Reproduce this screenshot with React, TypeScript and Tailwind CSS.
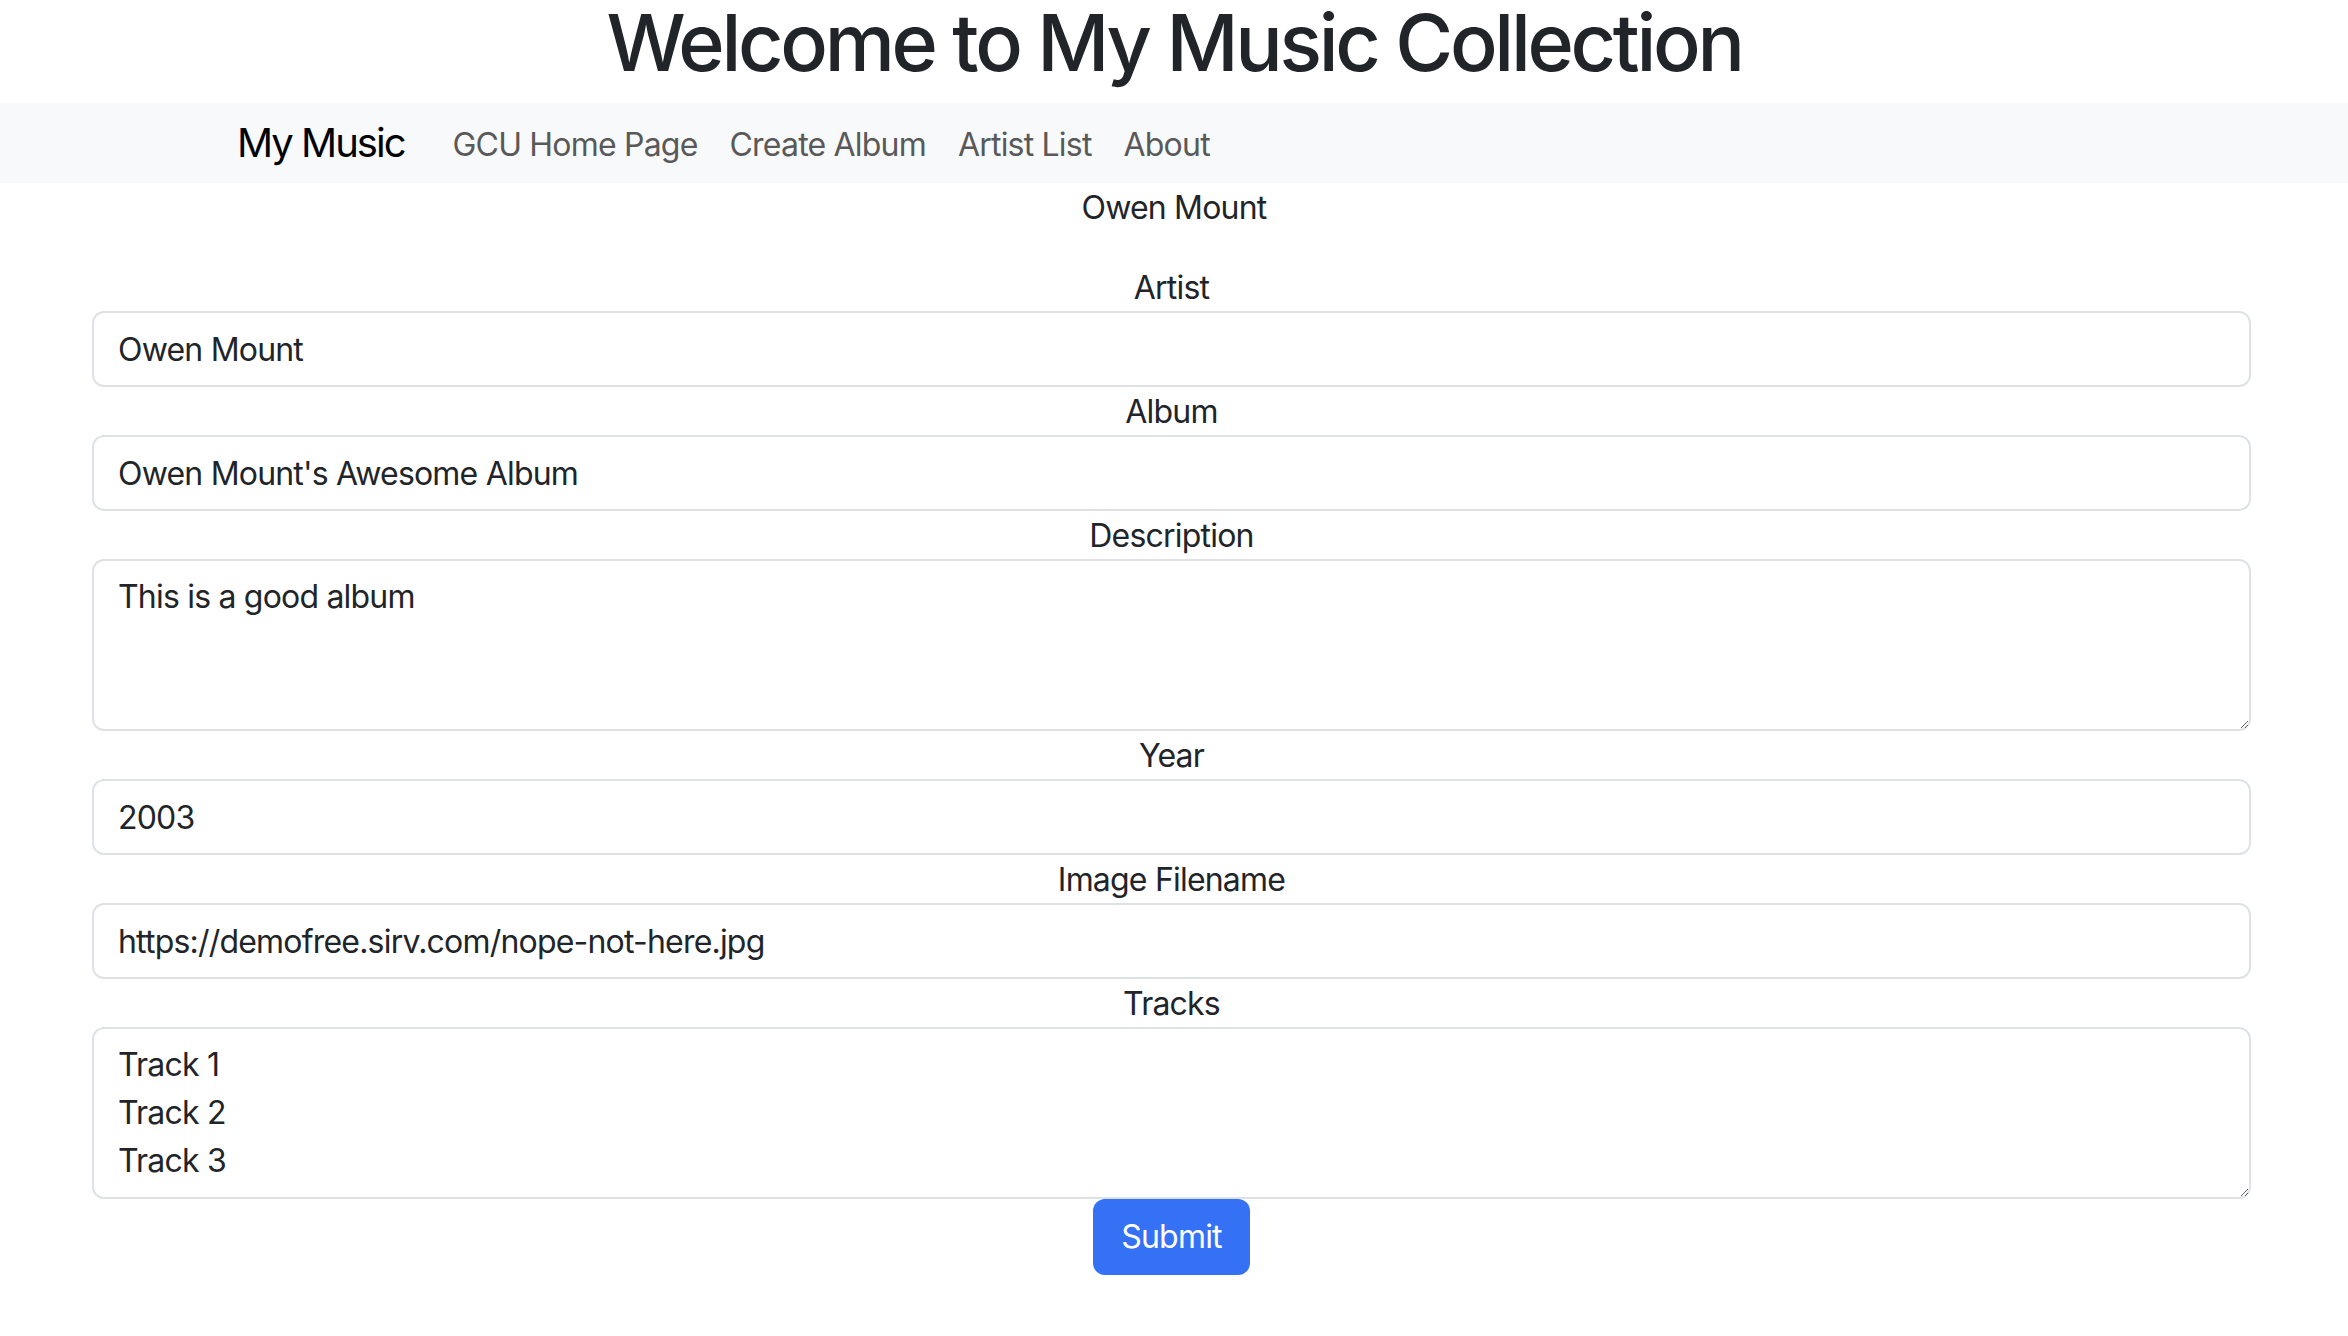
import React from 'react';

const fields = [
  { label: 'Artist', value: 'Owen Mount' },
  { label: 'Album', value: "Owen Mount's Awesome Album" },
];

const fields2 = [
  { label: 'Year', value: '2003' },
  { label: 'Image Filename', value: 'https://demofree.sirv.com/nope-not-here.jpg' },
];

const inputClass =
  'block w-full h-[76px] px-[24px] py-[12px] border-2 border-[#dee2e6] rounded-[12px] bg-white text-[32px] leading-[48px] tracking-[-0.025em] text-[#212529] outline-none';

const areaClass =
  'block w-full h-[172px] px-[24px] py-[12px] border-2 border-[#dee2e6] rounded-[12px] bg-white text-[32px] leading-[48px] tracking-[-0.025em] text-[#212529] outline-none';

function Label({ children }: { children: React.ReactNode }) {
  return (
    <label className="block text-center text-[32px] leading-[48px] tracking-[-0.025em] text-[#212529] pt-[1px] -mb-[1px]">
      {children}
    </label>
  );
}

export default function App() {
  return (
    <div className="min-h-screen bg-white text-[#212529]" style={{ fontFamily: 'Inter, "Noto Sans", sans-serif' }}>
      <h1 className="text-center text-[79px] leading-[84px] font-medium tracking-[-0.042em] text-[#212529] mb-[19px]">
        Welcome to My Music Collection
      </h1>

      {/* Navbar */}
      <nav className="bg-[#f8f9fa] h-[80px]">
        <div className="flex items-center h-full pl-[237px]">
          <a className="text-[40px] leading-[60px] tracking-[-0.05em] text-black mr-[48px]">My Music</a>
          <div className="flex items-center gap-[32px] pt-[3px]">
            <a className="text-[32px] leading-[48px] tracking-[-0.025em] text-[#595959]">GCU Home Page</a>
            <a className="text-[32px] leading-[48px] tracking-[-0.025em] text-[#595959]">Create Album</a>
            <a className="text-[32px] leading-[48px] tracking-[-0.025em] text-[#595959]">Artist List</a>
            <a className="text-[32px] leading-[48px] tracking-[-0.025em] text-[#595959]">About</a>
          </div>
        </div>
      </nav>

      <p className="text-center text-[32px] leading-[48px] tracking-[-0.025em] pt-[1px] mb-[31px]">Owen Mount</p>

      {/* Form */}
      <form className="ml-[92px] w-[2159px] flex flex-col" onSubmit={e => e.preventDefault()}>
        {fields.map(f => (
          <div key={f.label}>
            <Label>{f.label}</Label>
            <input className={inputClass} defaultValue={f.value} />
          </div>
        ))}

        <div>
          <Label>Description</Label>
          <textarea className={areaClass} rows={3} defaultValue="This is a good album" />
        </div>

        {fields2.map(f => (
          <div key={f.label}>
            <Label>{f.label}</Label>
            <input className={inputClass} defaultValue={f.value} />
          </div>
        ))}

        <div>
          <Label>Tracks</Label>
          <textarea className={areaClass} rows={3} defaultValue={'Track 1\nTrack 2\nTrack 3'} />
        </div>

        <div className="flex justify-center">
          <button
            type="submit"
            className="h-[76px] px-[28px] rounded-[12px] bg-[#3471f5] text-white text-[32px] leading-[48px] tracking-[-0.025em]"
          >
            Submit
          </button>
        </div>
      </form>
    </div>
  );
}
